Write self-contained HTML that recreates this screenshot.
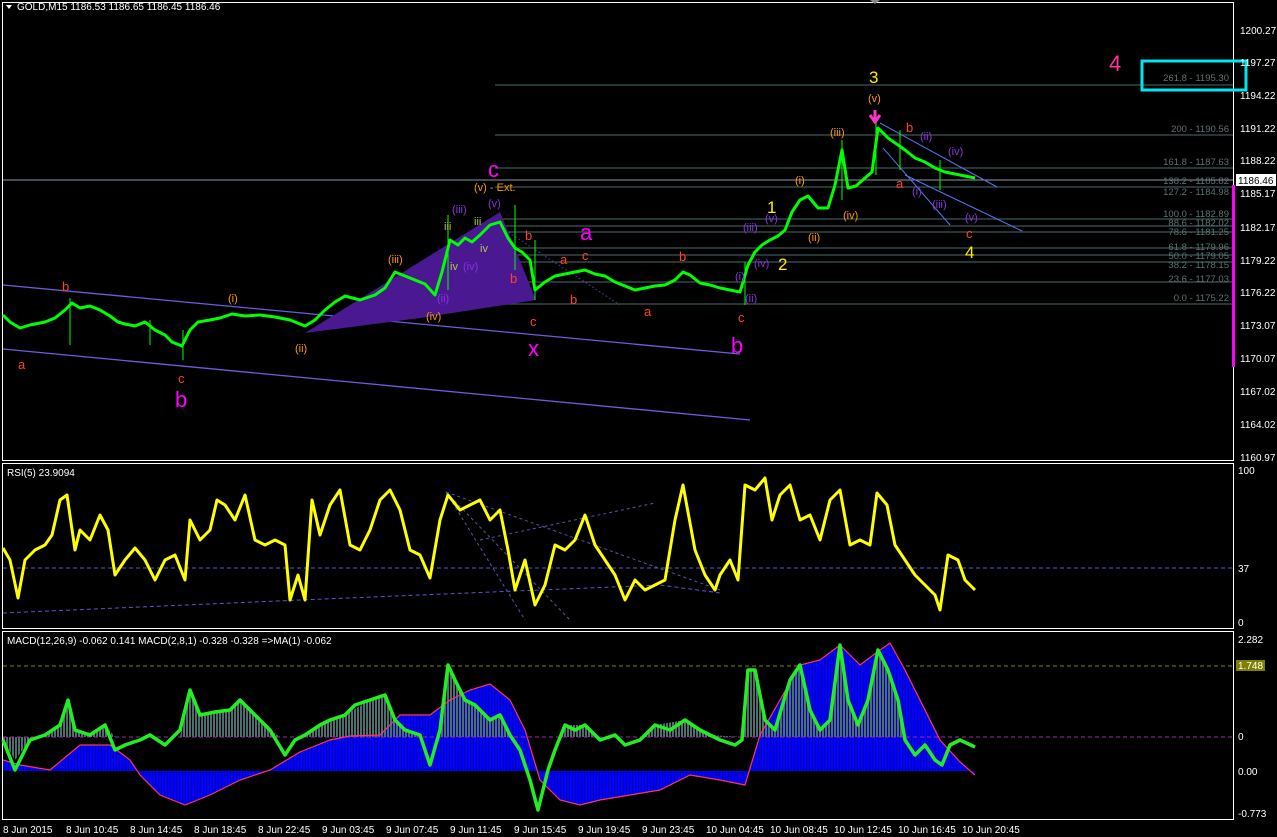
<!DOCTYPE html>
<html><head><meta charset="utf-8"><style>
html,body{margin:0;padding:0;background:#000;}
svg{display:block;font-family:"Liberation Sans",sans-serif;}
.ax{fill:#fff;font-size:10px}
.fl{fill:#5c7373;font-size:9.5px}
.t{font-size:10px;fill:#fff}
</style></head><body>
<svg width="1277" height="837" viewBox="0 0 1277 837" xmlns="http://www.w3.org/2000/svg">
<defs>
<pattern id="vh" width="3" height="10" patternUnits="userSpaceOnUse"><rect x="0" y="0" width="2" height="10" fill="#4d6e6e"/></pattern>
<pattern id="vb" width="3" height="10" patternUnits="userSpaceOnUse"><rect x="0" y="0" width="2" height="10" fill="#0000ff"/><rect x="2" width="1" height="10" fill="#0000b0"/></pattern>
</defs>
<rect width="1277" height="837" fill="#000"/>
<!-- panel borders -->
<g fill="none" stroke="#fff" stroke-width="1">
<rect x="2.5" y="2.5" width="1231" height="458"/>
<rect x="2.5" y="463.5" width="1231" height="165"/>
<rect x="2.5" y="631.5" width="1231" height="188"/>
</g>
<!-- title -->
<polygon points="6,5 12,5 9,9" fill="#fff"/>
<text x="17" y="10" class="t">GOLD,M15  1186.53 1186.65 1186.45 1186.46</text>
<polygon points="870,0 880,0 875,4" fill="#888"/>
<!-- fib lines -->
<g stroke="#3d5656" stroke-width="1.2">
<line x1="495" y1="85" x2="1233" y2="85"/>
<line x1="495" y1="135" x2="1233" y2="135"/>
<line x1="495" y1="168" x2="1233" y2="168"/>
<line x1="495" y1="187" x2="1233" y2="187"/>
<line x1="495" y1="219" x2="1233" y2="219"/>
<line x1="495" y1="226" x2="1233" y2="226"/>
<line x1="495" y1="232" x2="1233" y2="232"/>
<line x1="495" y1="248" x2="1233" y2="248"/>
<line x1="495" y1="255" x2="1233" y2="255"/>
<line x1="495" y1="262" x2="1233" y2="262"/>
<line x1="495" y1="282" x2="1233" y2="282"/>
<line x1="495" y1="304" x2="1233" y2="304"/>
</g>
<line x1="3" y1="180" x2="1233" y2="180" stroke="#8a9aaa" stroke-width="1"/>
<g class="fl" text-anchor="end">
<text x="1229" y="81">261.8 - 1195.30</text>
<text x="1229" y="132">200 - 1190.56</text>
<text x="1229" y="165">161.8 - 1187.63</text>
<text x="1229" y="184">138.2 - 1185.82</text>
<text x="1229" y="195">127.2 - 1184.98</text>
<text x="1229" y="217">100.0 - 1182.89</text>
<text x="1229" y="226">88.6 - 1182.02</text>
<text x="1229" y="235">78.6 - 1181.25</text>
<text x="1229" y="250">61.8 - 1179.96</text>
<text x="1229" y="259">50.0 - 1179.05</text>
<text x="1229" y="268">38.2 - 1178.15</text>
<text x="1229" y="282">23.6 - 1177.03</text>
<text x="1229" y="301">0.0 - 1175.22</text>
</g>
<!-- cyan box -->
<rect x="1142" y="61" width="104" height="29" fill="none" stroke="#00e5ee" stroke-width="3"/>
<!-- channel -->
<g stroke="#6a5ee0" stroke-width="1.3">
<line x1="3" y1="285" x2="740" y2="354"/>
<line x1="3" y1="349" x2="750" y2="420"/>
</g>
<polygon points="305,333 500,212 536,300 420,318" fill="#4a1890"/>
<!-- small blue trend lines -->
<g stroke="#5577ee" stroke-width="1">
<line x1="880" y1="123" x2="997" y2="187"/>
<line x1="905" y1="175" x2="1022" y2="231"/>
<line x1="883" y1="148" x2="950" y2="225"/>
<line x1="505" y1="230" x2="620" y2="305" stroke-dasharray="2,2" stroke="#334488"/>
</g>
<!-- price -->
<polyline fill="none" stroke="#00ff00" stroke-width="3" stroke-linejoin="round" points="3,315 10,322 20,328 30,325 45,322 55,318 65,310 72,303 80,308 90,306 100,310 110,316 118,322 125,324 135,326 145,322 155,330 165,335 172,342 182,346 190,330 198,322 210,320 220,318 232,314 245,316 260,315 275,317 290,320 305,326 315,320 325,310 335,302 345,296 360,300 375,295 385,288 395,272 405,276 415,280 425,284 435,295 442,272 450,240 458,245 465,238 472,242 480,235 490,225 500,222 508,238 515,248 522,252 530,260 535,290 545,282 555,276 565,274 575,272 585,270 595,274 605,276 615,282 625,286 635,290 645,288 655,286 665,285 675,280 683,272 690,275 700,283 710,285 720,288 730,290 740,292 748,265 755,252 762,245 770,240 778,236 785,230 792,212 800,200 808,196 818,208 828,208 835,185 842,150 848,188 856,186 865,178 872,172 878,128 888,138 898,145 905,150 915,158 925,162 935,168 945,172 955,174 965,176 975,178"/>
<g stroke="#00ff00" stroke-width="1">
<line x1="70" y1="298" x2="70" y2="345"/><line x1="150" y1="320" x2="150" y2="345"/><line x1="183" y1="330" x2="183" y2="360"/>
<line x1="448" y1="215" x2="448" y2="290"/><line x1="515" y1="205" x2="515" y2="270"/><line x1="535" y1="240" x2="535" y2="300"/>
<line x1="745" y1="262" x2="745" y2="305"/><line x1="842" y1="140" x2="842" y2="200"/><line x1="876" y1="120" x2="876" y2="175"/><line x1="900" y1="130" x2="900" y2="170"/><line x1="940" y1="160" x2="940" y2="190"/>
</g>
<!-- wave labels -->
<g font-size="13">
<text x="18" y="369" fill="#ff4422">a</text>
<text x="62" y="291" fill="#ff4422">b</text>
<text x="178" y="383" fill="#ff4422">c</text>
<text x="175" y="407" fill="#ff00ff" font-size="22">b</text>
<text x="228" y="302" fill="#ff9900" font-size="11">(i)</text>
<text x="295" y="352" fill="#ff9900" font-size="11">(ii)</text>
<text x="388" y="263" fill="#ff9900" font-size="11">(iii)</text>
<text x="426" y="320" fill="#ff9900" font-size="11">(iv)</text>
<text x="474" y="191" fill="#ff9900" font-size="11">(v) - Ext.</text>
<text x="488" y="177" fill="#ff00ff" font-size="22">c</text>
<text x="488" y="207" fill="#8833dd" font-size="11">(v)</text>
<text x="452" y="213" fill="#8833dd" font-size="11">(iii)</text>
<text x="463" y="270" fill="#8833dd" font-size="11">(iv)</text>
<text x="437" y="302" fill="#8833dd" font-size="11">(ii)</text>
<text x="444" y="230" fill="#aacc44" font-size="11">iii</text>
<text x="474" y="225" fill="#aacc44" font-size="11">iii</text>
<text x="480" y="252" fill="#aacc44" font-size="11">iv</text>
<text x="450" y="270" fill="#aacc44" font-size="11">iv</text>
<text x="525" y="240" fill="#ff4422">b</text>
<text x="510" y="283" fill="#ff4422">b</text>
<text x="530" y="326" fill="#ff4422">c</text>
<text x="528" y="356" fill="#ff00ff" font-size="22">x</text>
<text x="580" y="240" fill="#ff00ff" font-size="22">a</text>
<text x="560" y="264" fill="#ff4422">a</text>
<text x="582" y="260" fill="#ff4422">c</text>
<text x="570" y="304" fill="#ff4422">b</text>
<text x="644" y="316" fill="#ff4422">a</text>
<text x="679" y="261" fill="#ff4422">b</text>
<text x="738" y="322" fill="#ff4422">c</text>
<text x="731" y="353" fill="#ff00ff" font-size="22">b</text>
<text x="735" y="280" fill="#8833dd" font-size="11">(i)</text>
<text x="745" y="302" fill="#8833dd" font-size="11">(ii)</text>
<text x="743" y="231" fill="#8833dd" font-size="11">(iii)</text>
<text x="754" y="267" fill="#8833dd" font-size="11">(iv)</text>
<text x="765" y="222" fill="#8833dd" font-size="11">(v)</text>
<text x="767" y="213" fill="#ffee00" font-size="17">1</text>
<text x="778" y="270" fill="#ffee00" font-size="17">2</text>
<text x="795" y="184" fill="#ff9900" font-size="11">(i)</text>
<text x="808" y="241" fill="#ff9900" font-size="11">(ii)</text>
<text x="830" y="136" fill="#ff9900" font-size="11">(iii)</text>
<text x="843" y="219" fill="#ff9900" font-size="11">(iv)</text>
<text x="868" y="102" fill="#ff9900" font-size="11">(v)</text>
<text x="869" y="83" fill="#ffee00" font-size="17">3</text>
<text x="906" y="132" fill="#ff4422">b</text>
<text x="896" y="188" fill="#ff4422">a</text>
<text x="920" y="140" fill="#8833dd" font-size="11">(ii)</text>
<text x="948" y="155" fill="#8833dd" font-size="11">(iv)</text>
<text x="912" y="195" fill="#8833dd" font-size="11">(i)</text>
<text x="932" y="208" fill="#8833dd" font-size="11">(iii)</text>
<text x="965" y="221" fill="#8833dd" font-size="11">(v)</text>
<text x="966" y="238" fill="#ff4422">c</text>
<text x="965" y="258" fill="#ffee00" font-size="17">4</text>
<text x="1109" y="71" fill="#ff3399" font-size="22">4</text>
</g>
<path d="M875,110 v10 M870,115 l5,7 l5,-7" stroke="#ff33cc" stroke-width="3" fill="none"/>
<!-- price axis -->
<g class="ax">
<text x="1240" y="34">1200.27</text><text x="1240" y="66">1197.27</text><text x="1240" y="99">1194.22</text>
<text x="1240" y="132">1191.22</text><text x="1240" y="164">1188.22</text><text x="1240" y="197">1185.17</text>
<text x="1240" y="231">1182.17</text><text x="1240" y="264">1179.22</text><text x="1240" y="296">1176.22</text>
<text x="1240" y="329">1173.07</text><text x="1240" y="362">1170.07</text><text x="1240" y="395">1167.02</text>
<text x="1240" y="428">1164.02</text><text x="1240" y="461">1160.97</text>
</g>
<rect x="1236" y="174" width="40" height="12" fill="#fff"/>
<text x="1238" y="184" font-size="10" fill="#000">1186.46</text>
<rect x="1232" y="185" width="3" height="182" fill="#ff00ff"/>
<!-- RSI -->
<text x="7" y="476" class="t">RSI(5) 23.9094</text>
<line x1="3" y1="568" x2="1233" y2="568" stroke="#5555dd" stroke-dasharray="4,3"/>
<polyline fill="none" stroke="#5555dd" stroke-dasharray="4,3" points="3,613 300,600 660,585 720,593"/>
<g stroke="#5555aa" stroke-dasharray="3,3" fill="none">
<line x1="446" y1="492" x2="720" y2="590"/><line x1="446" y1="492" x2="570" y2="620"/><line x1="446" y1="492" x2="525" y2="620"/><line x1="480" y1="540" x2="655" y2="503"/>
</g>
<polyline fill="none" stroke="#ffff00" stroke-width="3" stroke-linejoin="round" points="3,548 10,560 18,598 25,560 35,550 45,545 52,535 60,500 67,495 75,550 80,530 90,540 100,515 108,530 115,575 125,560 135,548 145,560 155,580 165,560 175,555 185,580 190,520 200,540 210,530 217,500 225,505 235,520 245,495 255,540 265,545 275,540 285,545 290,600 298,575 305,600 312,500 320,535 330,505 340,490 350,545 360,550 370,530 380,500 390,490 400,510 410,550 420,555 430,578 440,520 448,495 460,510 470,505 480,500 490,520 500,510 508,550 515,590 525,560 535,605 545,585 555,545 565,550 575,540 585,515 595,545 605,560 615,575 625,600 635,580 645,590 655,585 665,580 675,520 683,485 695,550 705,575 715,590 720,575 730,560 738,580 745,485 755,490 765,478 772,520 780,495 790,485 800,520 810,515 820,540 830,500 840,490 850,545 860,540 870,545 877,493 887,505 895,545 905,560 915,575 925,585 935,595 940,610 948,555 958,560 965,580 975,590"/>
<g class="ax"><text x="1238" y="474">100</text><text x="1238" y="572">37</text><text x="1238" y="626">0</text></g>
<!-- MACD -->
<text x="7" y="644" class="t">MACD(12,26,9) -0.062 0.141  MACD(2,8,1) -0.328 -0.328  =&gt;MA(1) -0.062</text>
<line x1="3" y1="666" x2="1233" y2="666" stroke="#808000" stroke-dasharray="4,3"/>
<polygon fill="url(#vb)" points="3,771 3,760 20,765 50,770 80,745 110,745 130,760 140,775 160,795 185,805 210,795 240,780 270,770 300,752 330,740 350,736 380,735 400,715 430,715 450,700 470,690 490,684 510,700 525,730 540,780 560,800 580,805 600,800 630,795 660,790 690,775 720,780 745,785 760,735 780,700 800,665 820,660 840,645 860,665 880,650 890,643 905,670 920,700 940,740 960,762 975,775 975,771"/>
<polygon fill="url(#vh)" points="3,737 3,740 15,760 30,740 45,735 60,725 68,700 75,730 90,735 105,725 115,737 180,737 190,690 200,715 215,712 230,710 240,700 255,715 270,730 280,737 300,737 320,725 345,715 370,700 385,695 395,720 405,730 420,737 440,737 448,665 455,680 465,700 475,705 490,720 500,715 510,737 560,737 565,725 585,725 600,737 640,737 655,725 685,720 710,735 742,737 748,670 755,670 765,720 775,730 790,680 800,665 810,710 820,730 830,720 840,645 848,700 858,725 868,700 878,650 888,670 898,700 905,737 975,737"/>
<line x1="3" y1="737" x2="1233" y2="737" stroke="#aa22aa" stroke-dasharray="4,3"/>
<polyline fill="none" stroke="#ff3366" stroke-width="1.2" points="3,760 20,765 50,770 80,745 110,745 130,760 140,775 160,795 185,805 210,795 240,780 270,770 300,752 330,740 350,736 380,735 400,715 430,715 450,700 470,690 490,684 510,700 525,730 540,780 560,800 580,805 600,800 630,795 660,790 690,775 720,780 745,785 760,735 780,700 800,665 820,660 840,645 860,665 880,650 890,643 905,670 920,700 940,740 960,762 975,775"/>
<polyline fill="none" stroke="#22ee22" stroke-width="3.5" stroke-linejoin="round" points="3,740 15,770 30,740 45,735 60,725 68,700 75,730 90,735 105,725 115,750 125,745 140,740 150,735 165,745 180,730 190,690 200,715 215,712 230,710 240,700 255,715 270,730 285,755 295,740 305,735 320,725 330,720 345,715 355,705 370,700 385,695 395,720 405,730 420,735 430,765 440,730 448,665 455,680 465,700 475,705 490,720 500,715 510,735 520,750 530,780 538,810 548,770 555,750 565,725 575,730 585,725 600,740 615,735 625,745 640,740 655,725 670,730 685,720 700,730 710,735 720,740 735,745 742,740 748,670 755,670 765,720 775,730 790,680 800,665 810,710 820,730 830,720 840,645 848,700 858,725 868,700 878,650 888,670 898,700 905,740 915,755 925,745 935,760 942,765 950,745 960,740 975,747"/>
<g class="ax"><text x="1238" y="643">2.282</text><text x="1238" y="740">0</text><text x="1238" y="775">0.00</text><text x="1238" y="817">-0.773</text></g>
<rect x="1236" y="660" width="29" height="11" fill="#808000"/>
<text x="1238" y="669" font-size="10" fill="#fff">1.748</text>
<!-- time axis -->
<g class="ax">
<text x="3" y="833">8 Jun 2015</text><text x="66" y="833">8 Jun 10:45</text><text x="130" y="833">8 Jun 14:45</text><text x="194" y="833">8 Jun 18:45</text><text x="258" y="833">8 Jun 22:45</text><text x="322" y="833">9 Jun 03:45</text><text x="386" y="833">9 Jun 07:45</text><text x="450" y="833">9 Jun 11:45</text><text x="514" y="833">9 Jun 15:45</text><text x="578" y="833">9 Jun 19:45</text><text x="642" y="833">9 Jun 23:45</text><text x="706" y="833">10 Jun 04:45</text><text x="770" y="833">10 Jun 08:45</text><text x="834" y="833">10 Jun 12:45</text><text x="898" y="833">10 Jun 16:45</text><text x="962" y="833">10 Jun 20:45</text>
</g>
</svg>
</body></html>
